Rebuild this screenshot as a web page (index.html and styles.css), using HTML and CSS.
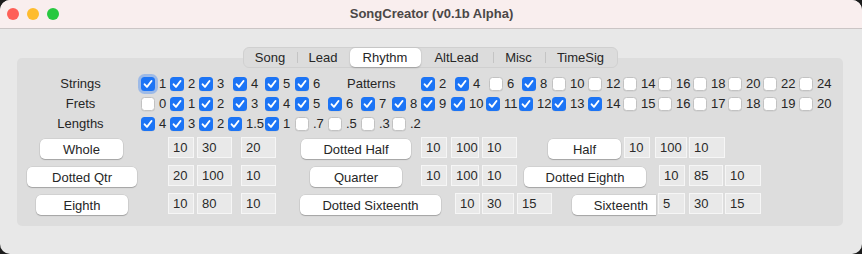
FILE: index.html
```html
<!DOCTYPE html>
<html lang="en">
<head>
    <meta charset="UTF-8">
    <title>SongCreator (v0.1b Alpha)</title>
    <link rel="stylesheet" href="styles.css">
</head>
<body>
    <div class="window">
        <div class="titlebar">
            <div class="lights">
                <span class="light red"></span>
                <span class="light yellow"></span>
                <span class="light green"></span>
            </div>
            <div class="title">SongCreator (v0.1b Alpha)</div>
        </div>

        <div class="content">
            <div class="tabs">
                <div class="tab t-song">Song</div>
                <div class="tab t-lead sep">Lead</div>
                <div class="tab t-rhythm active">Rhythm</div>
                <div class="tab t-altlead">AltLead</div>
                <div class="tab t-misc sep">Misc</div>
                <div class="tab t-timesig sep">TimeSig</div>
            </div>

            <div class="panel">
                <!-- checkbox grid -->
                <div class="checks">
                    <div class="lbl">Strings</div>
                    <label class="cb"><span class="box on focus"></span>1</label>
                    <label class="cb"><span class="box on"></span>2</label>
                    <label class="cb"><span class="box on"></span>3</label>
                    <label class="cb mid"><span class="box on"></span>4</label>
                    <label class="cb"><span class="box on"></span>5</label>
                    <label class="cb"><span class="box on"></span>6</label>
                    <div class="lbl patterns">Patterns</div>
                    <label class="cb"><span class="box on"></span>2</label>
                    <label class="cb mid"><span class="box on"></span>4</label>
                    <label class="cb mid"><span class="box"></span>6</label>
                    <label class="cb mid"><span class="box on"></span>8</label>
                    <label class="cb"><span class="box"></span>10</label>
                    <label class="cb"><span class="box"></span>12</label>
                    <label class="cb"><span class="box"></span>14</label>
                    <label class="cb"><span class="box"></span>16</label>
                    <label class="cb"><span class="box"></span>18</label>
                    <label class="cb"><span class="box"></span>20</label>
                    <label class="cb"><span class="box"></span>22</label>
                    <label class="cb"><span class="box"></span>24</label>

                    <div class="lbl">Frets</div>
                    <label class="cb"><span class="box"></span>0</label>
                    <label class="cb"><span class="box on"></span>1</label>
                    <label class="cb"><span class="box on"></span>2</label>
                    <label class="cb mid"><span class="box on"></span>3</label>
                    <label class="cb"><span class="box on"></span>4</label>
                    <label class="cb"><span class="box on"></span>5</label>
                    <label class="cb"><span class="box on"></span>6</label>
                    <label class="cb"><span class="box on"></span>7</label>
                    <label class="cb"><span class="box on"></span>8</label>
                    <label class="cb"><span class="box on"></span>9</label>
                    <label class="cb"><span class="box on"></span>10</label>
                    <label class="cb"><span class="box on"></span>11</label>
                    <label class="cb"><span class="box on"></span>12</label>
                    <label class="cb"><span class="box on"></span>13</label>
                    <label class="cb"><span class="box on"></span>14</label>
                    <label class="cb"><span class="box"></span>15</label>
                    <label class="cb"><span class="box"></span>16</label>
                    <label class="cb"><span class="box"></span>17</label>
                    <label class="cb"><span class="box"></span>18</label>
                    <label class="cb"><span class="box"></span>19</label>
                    <label class="cb"><span class="box"></span>20</label>

                    <div class="lbl">Lengths</div>
                    <label class="cb"><span class="box on"></span>4</label>
                    <label class="cb"><span class="box on"></span>3</label>
                    <label class="cb"><span class="box on"></span>2</label>
                    <label class="cb"><span class="box on"></span>1.5</label>
                    <label class="cb"><span class="box on"></span>1</label>
                    <label class="cb"><span class="box"></span>.7</label>
                    <label class="cb"><span class="box"></span>.5</label>
                    <label class="cb"><span class="box"></span>.3</label>
                    <label class="cb"><span class="box"></span>.2</label>
                </div>

                <!-- note length rows -->
                <div class="row">
                    <button class="btn ml23 w83">Whole</button>
                    <div class="entry ml45 w26">10</div>
                    <div class="entry ml3 w35">30</div>
                    <div class="entry ml9 w35">20</div>
                    <button class="btn ml25 w110">Dotted Half</button>
                    <div class="entry ml10 w26">10</div>
                    <div class="entry ml4 w28">100</div>
                    <div class="entry ml3 w35">10</div>
                    <button class="btn ml31 w73">Half</button>
                    <div class="entry ml3 w26">10</div>
                    <div class="entry ml5 w32">100</div>
                    <div class="entry ml2 w36">10</div>
                </div>
                <div class="row">
                    <button class="btn ml10 w110">Dotted Qtr</button>
                    <div class="entry ml31 w26">20</div>
                    <div class="entry ml3 w35">100</div>
                    <div class="entry ml9 w35">10</div>
                    <button class="btn ml34 w92">Quarter</button>
                    <div class="entry ml19 w26">10</div>
                    <div class="entry ml4 w28">100</div>
                    <div class="entry ml3 w35">10</div>
                    <button class="btn ml7 w122">Dotted Eighth</button>
                    <div class="entry ml13 w26">10</div>
                    <div class="entry ml4 w34">85</div>
                    <div class="entry ml2 w36">10</div>
                </div>
                <div class="row">
                    <button class="btn ml19 w92">Eighth</button>
                    <div class="entry ml40 w26">10</div>
                    <div class="entry ml3 w35">80</div>
                    <div class="entry ml9 w35">10</div>
                    <button class="btn ml24 w141">Dotted Sixteenth</button>
                    <div class="entry ml14 w25">10</div>
                    <div class="entry ml2 w32">30</div>
                    <div class="entry ml3 w35">15</div>
                    <button class="btn cut ml20 w84">Sixteenth</button>
                    <div class="entry ml2 w27">5</div>
                    <div class="entry ml4 w34">30</div>
                    <div class="entry ml2 w36">15</div>
                </div>
            </div>
        </div>
    </div>
</body>
</html>
```

FILE: styles.css
```css
html, body {
    margin: 0;
    padding: 0;
    background-color: #1c1c1c;
}

body {
    font-family: "Liberation Sans", Arial, sans-serif;
    font-size: 13px;
    color: #262626;
}

.window {
    width: 862px;
    height: 254px;
    background-color: #e8e8e8;
    border-radius: 10px;
    overflow: hidden;
}

/* title bar */
.titlebar {
    height: 28px;
    background-color: #f9eeee;
    border-bottom: 1px solid #cbc5c5;
    display: flex;
    align-items: center;
}

.lights {
    display: flex;
    gap: 8px;
    margin-left: 7px;
    width: 120px;
}

.light {
    width: 12px;
    height: 12px;
    border-radius: 50%;
}

.red { background-color: #fe5f57; }
.yellow { background-color: #febc2e; }
.green { background-color: #28c840; }

.title {
    flex: 1;
    text-align: center;
    font-weight: bold;
    color: #4b4747;
    margin-right: 126px;
    padding-bottom: 1px;
}

/* tabs */
.content {
    padding: 18px 19px 0 17px;
}

.tabs {
    position: relative;
    z-index: 1;
    display: flex;
    width: 373px;
    height: 19px;
    margin: 0 auto;
    padding: 0;
    background-color: #dcdcdc;
    border: 1px solid #d0d0d0;
    border-radius: 6px;
}

.tab {
    position: relative;
    text-align: center;
    line-height: 19px;
    color: #262626;
}

.tab.sep::before {
    content: "";
    position: absolute;
    left: 0;
    top: 4px;
    height: 11px;
    border-left: 1px solid #c4c4c4;
}

.tab.active {
    background-color: #fff;
    border-radius: 5px;
    box-shadow: 0 0.5px 1.5px rgba(0, 0, 0, 0.25);
}

.t-song { width: 53px; }
.t-lead { width: 53px; }
.t-rhythm { width: 71px; }
.t-altlead { width: 72px; }
.t-misc { width: 52px; }
.t-timesig { width: 72px; }

/* panel */
.panel {
    margin-top: -10px;
    height: 168px;
    background-color: #dddddd;
    border-radius: 5px;
    box-sizing: border-box;
    padding-top: 16px;
}

.checks {
    display: grid;
    grid-template-columns: 119px 29px 29px 29px 37px 30px 33px 33px 31px 29px 30px 35px 33px 33px 36px 35px 35px 35px 35px 35px 36px 36px;
    grid-auto-rows: 20px;
    margin-left: 4px;
}

.lbl {
    text-align: center;
    line-height: 20px;
}

.lbl.patterns {
    grid-column: span 3;
    text-align: left;
    padding-left: 20px;
}

.cb {
    display: flex;
    align-items: center;
    gap: 4px;
    padding-left: 1px;
    justify-self: start;
    line-height: 20px;
}

.cb.mid {
    justify-self: center;
    padding-left: 0;
}

.box {
    width: 14px;
    height: 14px;
    box-sizing: border-box;
    border-radius: 3.5px;
    background-color: #fff;
    border: 0.5px solid #c2c2c2;
    box-shadow: 0 0.5px 0.5px rgba(0, 0, 0, 0.08);
}

.box.on {
    border: none;
    background: #1c74f5 url("data:image/svg+xml,%3Csvg xmlns='http://www.w3.org/2000/svg' viewBox='0 0 14 14'%3E%3Cpath d='M3.6 7.3 6 9.9 10.5 4' fill='none' stroke='white' stroke-width='1.9' stroke-linecap='round' stroke-linejoin='round'/%3E%3C/svg%3E") no-repeat center;
}

.box.focus {
    box-shadow: 0 0 0 3px rgba(80, 145, 245, 0.45);
}

/* note length rows */
.row {
    display: flex;
    align-items: flex-start;
    height: 28px;
}

.row:first-of-type {
    margin-top: 0;
}

.checks + .row {
    margin-top: 3px;
}

.btn {
    font-family: inherit;
    font-size: 13px;
    color: #262626;
    height: 20px;
    margin-top: 2px;
    padding: 0;
    border: none;
    border-radius: 5px;
    background-color: #fff;
    box-shadow: 0 0 0 0.5px rgba(0, 0, 0, 0.1), 0 1px 1px rgba(0, 0, 0, 0.22);
}

.btn.cut {
    border-radius: 5px 0 0 5px;
    text-align: right;
    padding-right: 8px;
}

.entry {
    height: 21px;
    box-sizing: border-box;
    line-height: 19px;
    padding-left: 4px;
    background-color: #e9e9e9;
    border: 1px solid #f6f6f6;
    color: #2a2a2a;
}

.ml1 { margin-left: 1px; }
.ml2 { margin-left: 2px; }
.ml3 { margin-left: 3px; }
.ml4 { margin-left: 4px; }
.ml5 { margin-left: 5px; }
.ml7 { margin-left: 7px; }
.ml9 { margin-left: 9px; }
.ml10 { margin-left: 10px; }
.ml13 { margin-left: 13px; }
.ml14 { margin-left: 14px; }
.ml19 { margin-left: 19px; }
.ml20 { margin-left: 20px; }
.ml23 { margin-left: 23px; }
.ml24 { margin-left: 24px; }
.ml25 { margin-left: 25px; }
.ml31 { margin-left: 31px; }
.ml34 { margin-left: 34px; }
.ml40 { margin-left: 40px; }
.ml45 { margin-left: 45px; }

.w25 { width: 25px; }
.w26 { width: 26px; }
.w27 { width: 27px; }
.w28 { width: 28px; }
.w32 { width: 32px; }
.w34 { width: 34px; }
.w35 { width: 35px; }
.w36 { width: 36px; }
.w73 { width: 73px; }
.w83 { width: 83px; }
.w84 { width: 84px; }
.w92 { width: 92px; }
.w110 { width: 110px; }
.w122 { width: 122px; }
.w141 { width: 141px; }
```
